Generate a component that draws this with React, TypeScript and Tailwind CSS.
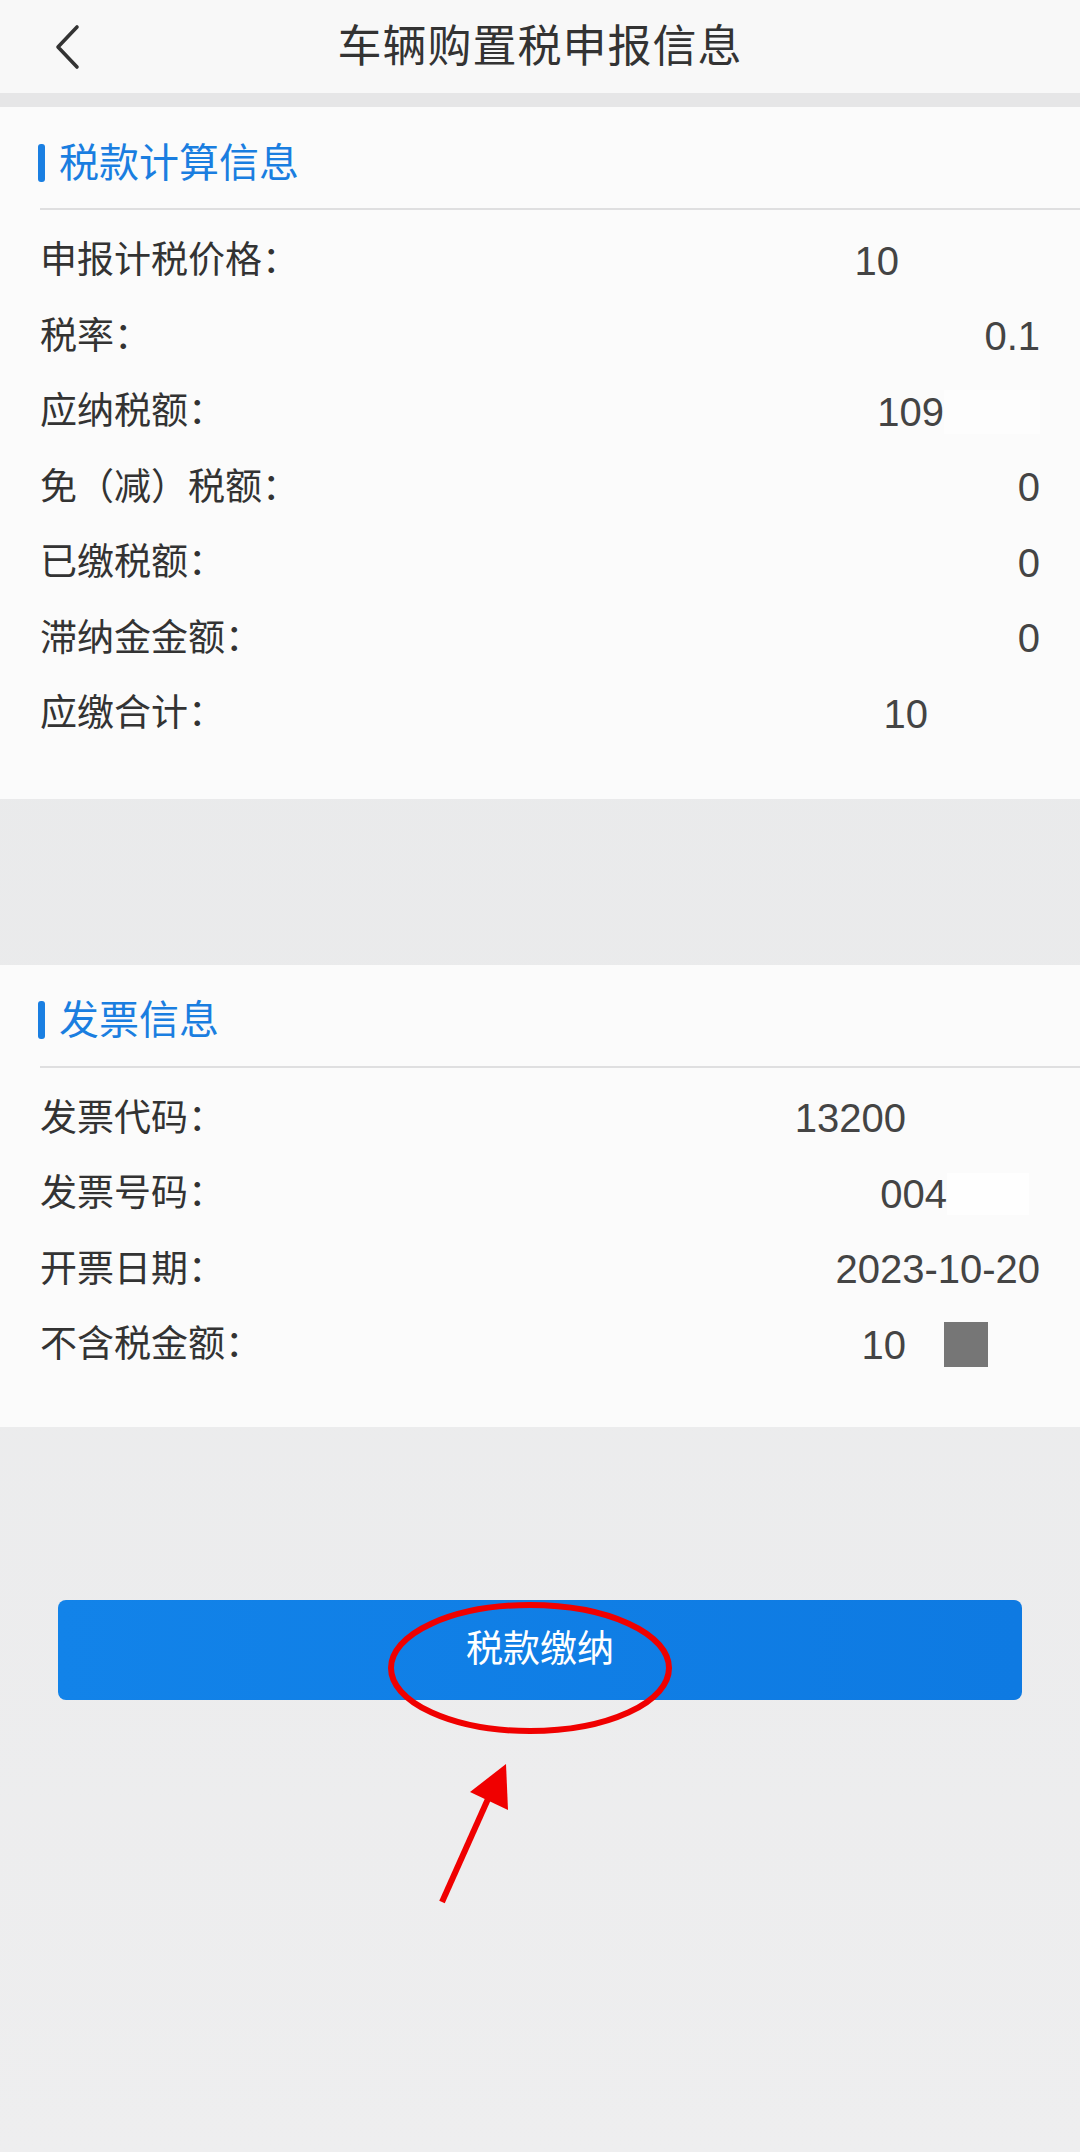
import React from 'react'

type Row = {
  label: string
  value: string
  tail?: React.ReactNode
}

const taxRows: Row[] = [
  { label: '申报计税价格：', value: '10', tail: <span className="inline-block w-[141px]" /> },
  { label: '税率：', value: '0.1' },
  { label: '应纳税额：', value: '109', tail: <span className="inline-block h-[44px] w-[96px] bg-[#fdfdfd]" /> },
  { label: '免（减）税额：', value: '0' },
  { label: '已缴税额：', value: '0' },
  { label: '滞纳金金额：', value: '0' },
  { label: '应缴合计：', value: '10', tail: <span className="inline-block w-[112px]" /> },
]

const invoiceRows: Row[] = [
  { label: '发票代码：', value: '13200', tail: <span className="inline-block w-[134px]" /> },
  {
    label: '发票号码：',
    value: '004',
    tail: (
      <span className="flex w-[93px] items-center">
        <span className="inline-block h-[42px] w-[82px] bg-[#fefefe]" />
      </span>
    ),
  },
  { label: '开票日期：', value: '2023-10-20' },
  {
    label: '不含税金额：',
    value: '10',
    tail: (
      <span className="flex items-center">
        <span className="ml-[38px] inline-block h-[45px] w-[44px] bg-[#767676]" />
        <span className="inline-block w-[52px]" />
      </span>
    ),
  },
]

function Section({ title, rows, bottom }: { title: string; rows: Row[]; bottom: string }) {
  return (
    <div className={`bg-[#fbfbfb] ${bottom}`}>
      {/* section head */}
      <div className="flex h-[101px] items-center pt-[10px] pl-[38px]">
        <span className="h-[38px] w-[7px] rounded-[3px] bg-[#1a7fe2]" />
        <span className="ml-[14px] text-[40px] leading-none text-[#1a7ee0]">{title}</span>
      </div>
      <div className="ml-[40px] h-[2px] bg-[#dfdfe0]" />
      <div className="pt-[13px]">
        {rows.map((r) => (
          <div key={r.label} className="flex h-[75.5px] items-center justify-between pl-[40px] pr-[40px]">
            <span className="text-[37px] leading-none text-[#333333]">{r.label}</span>
            <span className="flex items-center">
              <span className="text-[40px] leading-none text-[#444444]">{r.value}</span>
              {r.tail}
            </span>
          </div>
        ))}
      </div>
    </div>
  )
}

export default function App() {
  return (
    <div className="relative min-h-[2152px] w-[1080px] bg-gradient-to-b from-[#e7e8e9] to-[#eeeeef] font-['Liberation_Sans','Noto_Sans_CJK_SC',sans-serif]">
      {/* Nav bar */}
      <div className="flex h-[93px] items-center bg-[#f8f8f8]">
        <div className="flex w-[140px] items-center pl-[54px]">
          <svg width="26" height="46" viewBox="0 0 26 46" fill="none">
            <path d="M23 3 L4 23 L23 43" stroke="#333" strokeWidth="3.6" strokeLinecap="round" strokeLinejoin="round" />
          </svg>
        </div>
        <div className="flex-1 text-center text-[44px] leading-none tracking-[1px] text-[#333333]">车辆购置税申报信息</div>
        <div className="w-[140px]" />
      </div>
      <div className="h-[14px] bg-[#e6e6e7]" />

      <Section title="税款计算信息" rows={taxRows} bottom="pb-[47px]" />

      <div className="mt-[166px]">
        <Section title="发票信息" rows={invoiceRows} bottom="pb-[44px]" />
      </div>

      <div className="mx-[58px] mt-[173px] flex h-[100px] items-center justify-center rounded-[8px] bg-gradient-to-r from-[#1283e9] to-[#0e7ae2]">
        <span className="text-[37px] leading-none text-white">税款缴纳</span>
      </div>

      {/* annotation */}
      <svg className="pointer-events-none absolute left-0 top-0" width="1080" height="2152" viewBox="0 0 1080 2152">
        <ellipse cx="530" cy="1668" rx="139" ry="63" fill="none" stroke="#f00000" strokeWidth="6" />
        <line x1="442" y1="1902" x2="492" y2="1790" stroke="#f00000" strokeWidth="6" />
        <polygon points="506,1764 470,1792 508,1810" fill="#f00000" />
      </svg>
    </div>
  )
}
